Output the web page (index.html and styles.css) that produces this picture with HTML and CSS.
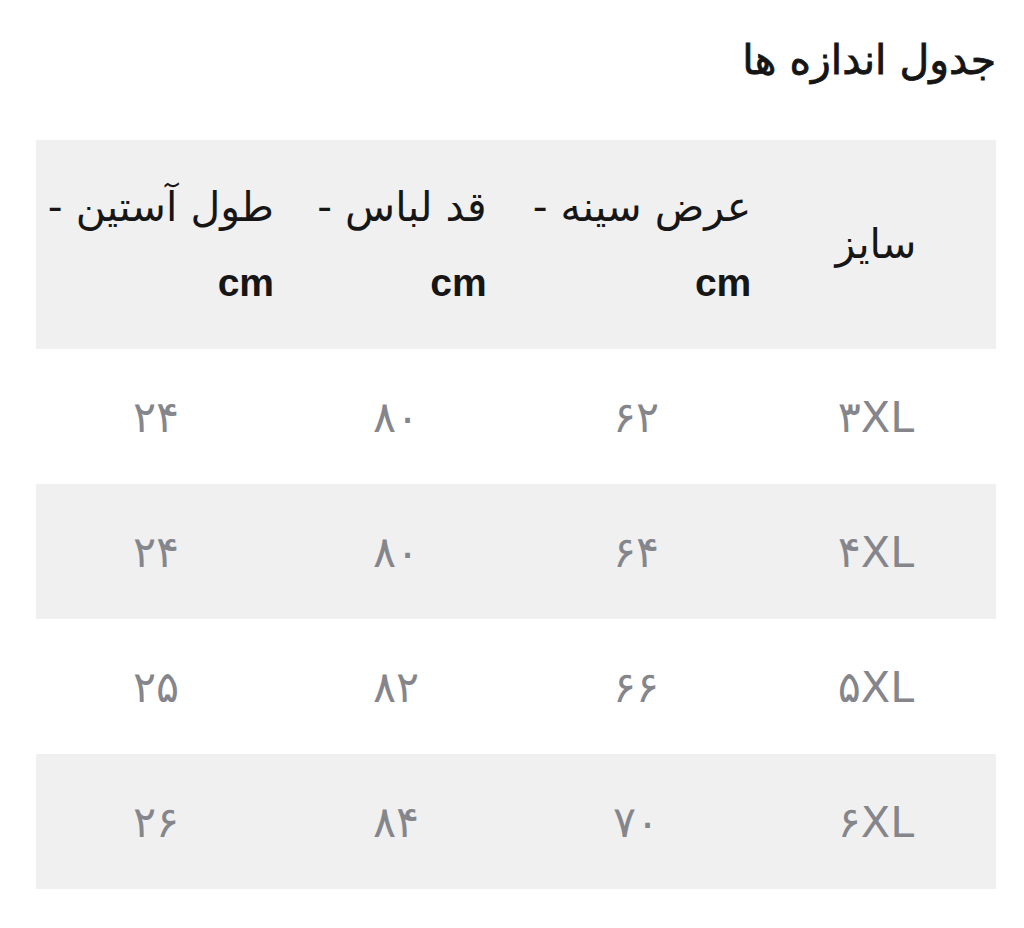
FILE: index.html
```html
<!DOCTYPE html>
<html lang="fa" dir="rtl">
<head>
<meta charset="utf-8">
<link rel="stylesheet" href="styles.css">
</head>
<body>
<div class="page">
  <h1 class="title">جدول اندازه ها</h1>
  <table class="sizes">
    <thead>
      <tr class="head">
        <th class="size-col"><span class="hcell">سایز</span></th>
        <th><span class="hcell">عرض سینه -<br><span class="unit">cm</span></span></th>
        <th><span class="hcell">قد لباس -<br><span class="unit">cm</span></span></th>
        <th><span class="hcell">طول آستین -<br><span class="unit">cm</span></span></th>
      </tr>
    </thead>
    <tbody>
      <tr><td>۳XL</td><td>۶۲</td><td>۸۰</td><td>۲۴</td></tr>
      <tr class="alt"><td>۴XL</td><td>۶۴</td><td>۸۰</td><td>۲۴</td></tr>
      <tr><td>۵XL</td><td>۶۶</td><td>۸۲</td><td>۲۵</td></tr>
      <tr class="alt"><td>۶XL</td><td>۷۰</td><td>۸۴</td><td>۲۶</td></tr>
    </tbody>
  </table>
</div>
</body>
</html>
```

FILE: styles.css
```css
html, body {
  margin: 0;
  padding: 0;
  background: #ffffff;
}
body {
  font-family: "DejaVu Sans", "Noto Sans", sans-serif;
  color: #1c1c1c;
}
.page {
  padding: 34px 28px 0 36px;
}
.title {
  margin: 0 0 54px 0;
  font-size: 41px;
  font-weight: normal;
  line-height: 52px;
  color: #151515;
  -webkit-text-stroke: 0.8px #151515;
}
.sizes {
  width: 960px;
  border-collapse: collapse;
  table-layout: fixed;
}
.sizes td {
  width: 232px;
  padding: 0 4px;
  text-align: center;
  vertical-align: middle;
}
.sizes th {
  width: 224px;
  padding: 0 2px 0 14px;
  text-align: center;
  vertical-align: middle;
  font-weight: normal;
  font-size: 41px;
  color: #161616;
  line-height: 75px;
}
.sizes th.size-col {
  width: 232px;
  padding: 0 4px;
}
.head {
  background: #f0f0f0;
  height: 209px;
}
.hcell {
  display: inline-block;
  text-align: right;
  white-space: nowrap;
}
.unit {
  font-family: "Liberation Sans", Arial, sans-serif;
  font-weight: bold;
  font-size: 39px;
}
.sizes td {
  height: 135px;
  font-size: 43px;
  color: #85868b;
}
.alt {
  background: #f0f0f0;
}
```
